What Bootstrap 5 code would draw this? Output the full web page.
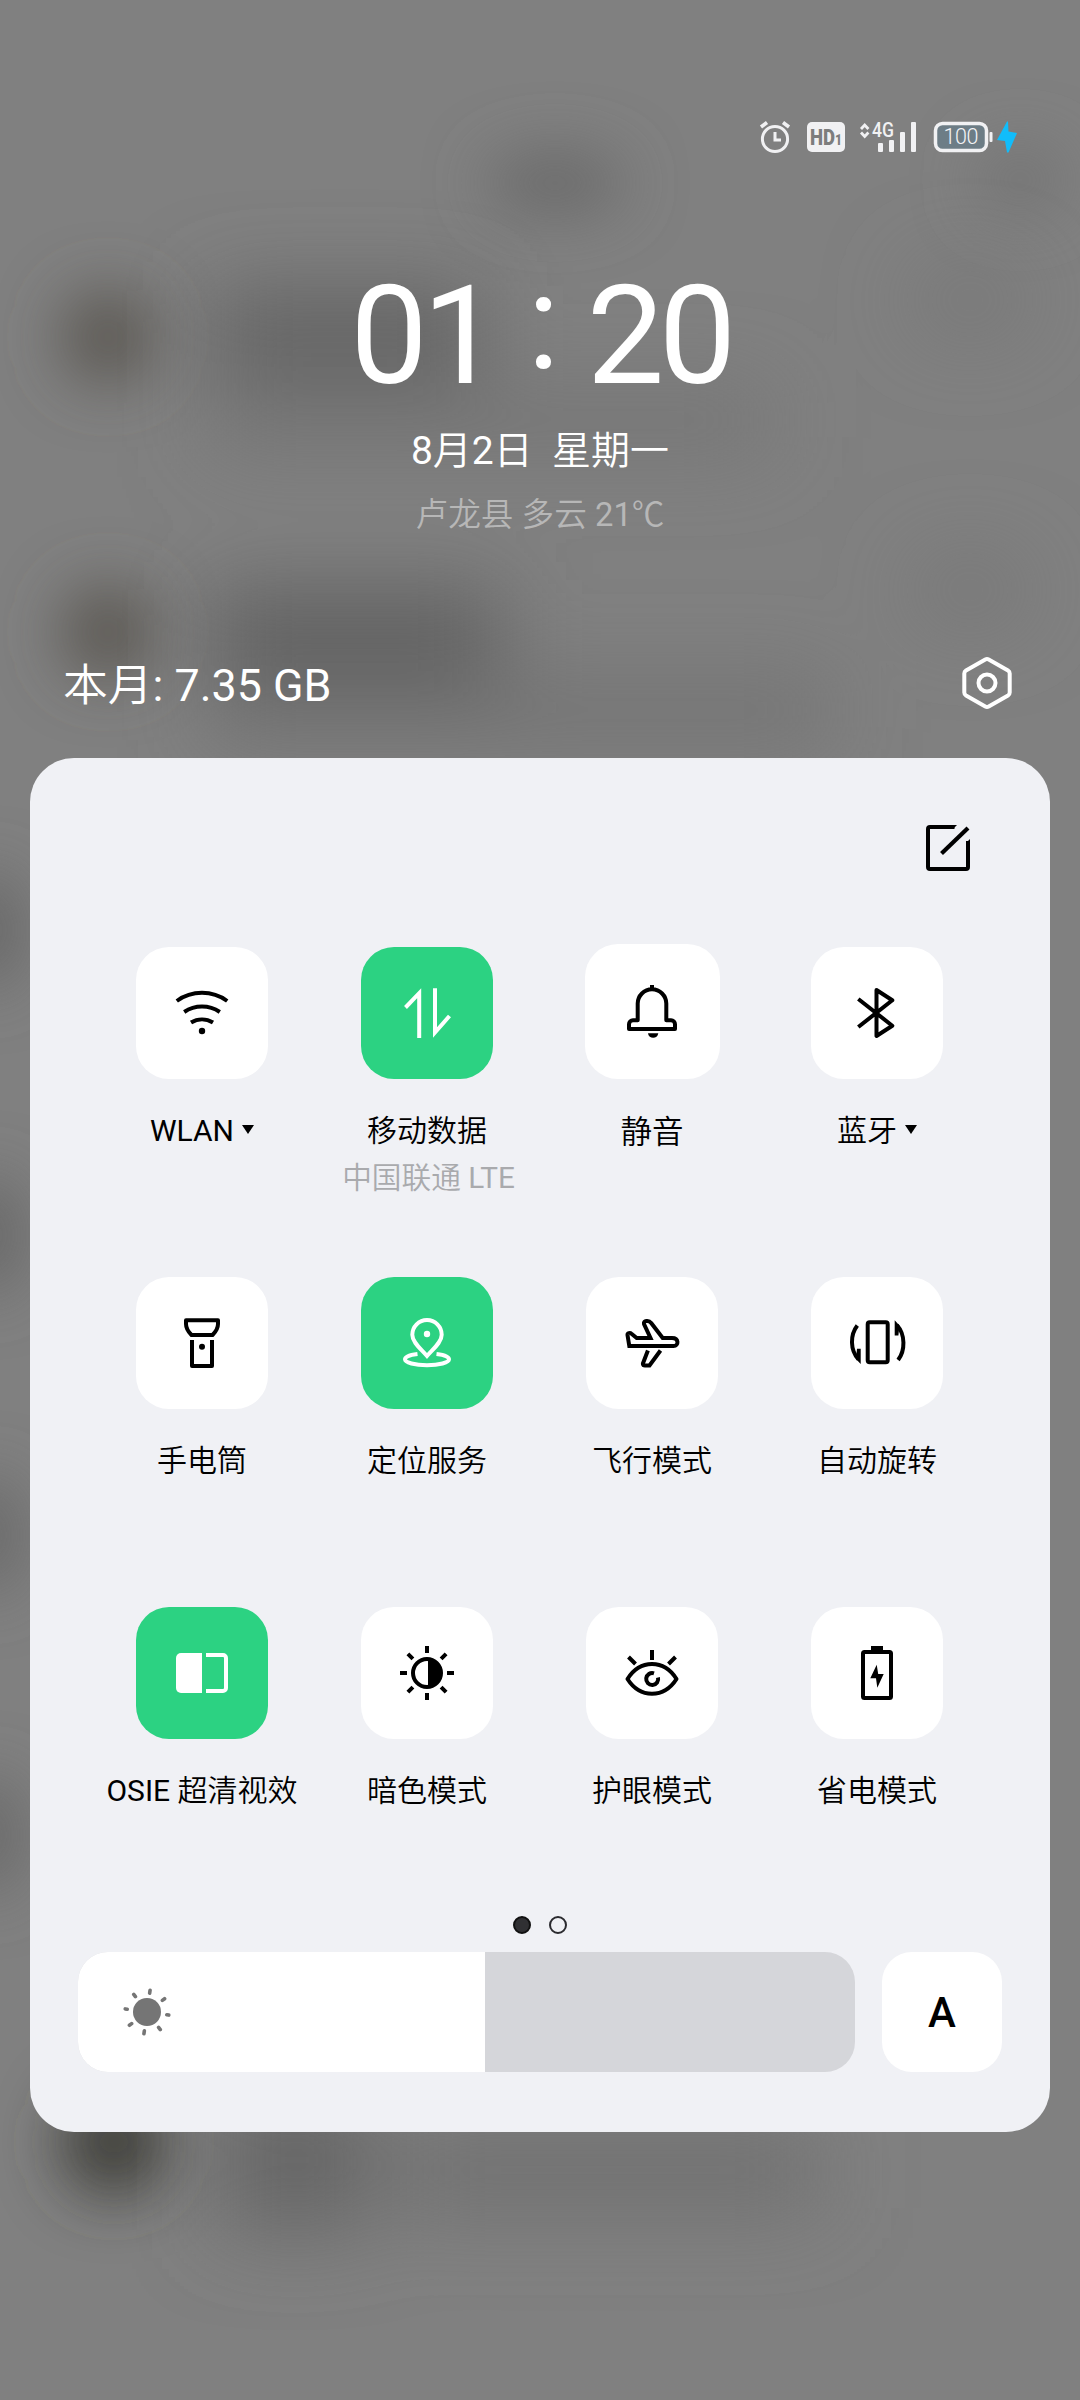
<!DOCTYPE html>
<html lang="zh-CN">
<head>
<meta charset="utf-8">
<meta name="viewport" content="width=device-width, initial-scale=1">
<title>控制中心</title>
<link rel="stylesheet" href="https://cdn.jsdelivr.net/npm/bootstrap@5.3.0/dist/css/bootstrap.min.css">
<style>
body{margin:0;background:#7f7f7f;font-family:Roboto,"Noto Sans CJK SC DemiLight","Noto Sans CJK SC Light","Noto Sans CJK SC",sans-serif;color:#fff}
svg{display:block;flex:none}
.screen{width:1080px;height:2400px;overflow:hidden}
.backdrop{z-index:0}
.content{z-index:1;height:2400px}
.statusbar{height:154px;padding:0 62px 0 0}
.clock{font-size:138px;line-height:138px;margin-top:113px;height:138px;padding-left:1px}
.clock span{letter-spacing:-5.5px}
.clock .colon{margin:-13px 27px 0 33px;letter-spacing:0;font-size:134px}
.date{font-size:39px;line-height:50px;margin-top:21px;white-space:pre}
.weather{font-size:32.7px;line-height:44px;margin-top:17px;color:#b7b7b7}
.usage{font-size:44.8px;line-height:60px;padding:0 66px 0 63px;margin-top:119px;height:60px}
.usage svg{margin-top:-4px}
.panel{width:1020px;height:1374px;margin:42px 30px 0;background:#f0f1f5;border-radius:44px;color:#000}
.editbar{height:186px;padding:67px 80px 0 0}
.tiles{padding:0 60.5px 0 59.5px;--bs-gutter-x:0;margin:0}
.tile{height:330px}
.tile-btn{width:132px;height:132px;border-radius:33px;background:#fff;border:0;padding:0;margin-top:3px;color:#000}
.tile-btn.on{background:#2cd282;color:#fff}
.tile-btn.pressed{width:135px;height:135px;margin-top:0;padding-top:3px}
.tile-label{font-size:30px;line-height:40px;margin-top:32px;white-space:nowrap}
.tile-label.big{font-size:31.5px;margin-top:34px}
.tile-sub{font-size:29.7px;line-height:40px;margin-top:7px;padding-left:3px;color:#a9aaad;white-space:nowrap}
.arrow-down{border:6.5px solid transparent;border-top:9px solid #000;border-bottom:0;margin-left:8px;margin-top:-3px}
.pager{height:18px;margin-top:-18px;gap:18px}
.pager span{width:18px;height:18px;border-radius:50%;border:2px solid #2b2b2f}
.pager .now{background:#303033;border-color:#111}
.controls{gap:27px;margin-top:18px;padding:0 48px}
.slider{width:777px;height:120px;border-radius:30px;background:#d5d6da;overflow:hidden}
.slider-fill{height:120px;background:#fff;padding-left:44px}
.auto-btn{width:120px;height:120px;border-radius:30px;background:#fff;border:0;font-size:42px;font-weight:500;line-height:42px;color:#000;padding:2px 0 0}
.ic{fill:none;stroke:currentColor;stroke-width:4}
.ic .f{fill:currentColor;stroke:none}
</style>
</head>
<body>
<div class="screen position-relative">
  <svg class="backdrop position-absolute top-0 start-0" width="1080" height="2400" viewBox="0 0 1080 2400">
    <defs>
      <filter id="soft" x="-100%" y="-100%" width="300%" height="300%"><feGaussianBlur stdDeviation="30"/></filter>
      <filter id="wide" x="-100%" y="-100%" width="300%" height="300%"><feGaussianBlur stdDeviation="42"/></filter>
    </defs>
    <rect width="1080" height="2400" fill="#808080"/>
    <g filter="url(#soft)">
      <ellipse cx="555" cy="183" rx="70" ry="32" fill="#6a6a6a"/>
      <ellipse cx="1020" cy="180" rx="45" ry="34" fill="#747474"/>
      <circle cx="108" cy="337" r="48" fill="#5d5a55"/>
      <circle cx="108" cy="632" r="48" fill="#5d5a55"/>
      <circle cx="114" cy="2142" r="54" fill="#40403a"/>
      <ellipse cx="-10" cy="930" rx="30" ry="60" fill="#646464"/>
      <ellipse cx="-10" cy="1235" rx="30" ry="60" fill="#646464"/>
      <ellipse cx="-10" cy="1535" rx="30" ry="60" fill="#666"/>
      <ellipse cx="-10" cy="1835" rx="30" ry="60" fill="#666"/>
    </g>
    <g filter="url(#wide)">
      <rect x="210" y="290" width="270" height="90" fill="#636363"/>
      <rect x="210" y="390" width="560" height="60" fill="#747474"/>
      <rect x="210" y="590" width="290" height="90" fill="#606060"/>
      <rect x="210" y="680" width="620" height="60" fill="#727272"/>
      <ellipse cx="970" cy="300" rx="60" ry="35" fill="#777"/>
      <ellipse cx="970" cy="590" rx="60" ry="35" fill="#777"/>
      <rect x="220" y="2090" width="150" height="140" fill="#666"/>
      <rect x="400" y="2130" width="420" height="80" fill="#707070"/>
    </g>
  </svg>

  <div class="content position-relative d-flex flex-column">
    <header class="statusbar d-flex justify-content-end align-items-end">
      <svg width="260" height="34" viewBox="758 120 260 34">
        <g fill="none" stroke="#f1f1f3" stroke-width="3">
          <circle cx="775" cy="139" r="12.600"/><path d="M775 132v8h6"/>
          <path d="M761 127l6-4.500M789 127l-6-4.500" stroke-width="3.600"/>
        </g>
        <rect x="807" y="122" width="38" height="30" rx="5" fill="#f1f1f3"/>
        <text x="810" y="145" font-size="21.500" font-weight="900" fill="#7d7d7d" textLength="32" lengthAdjust="spacingAndGlyphs">HD<tspan font-size="14">1</tspan></text>
        <path d="M861 129l3.700-4 3.700 4M861 132.500l3.700 4 3.700-4" fill="none" stroke="#f1f1f3" stroke-width="2.800"/>
        <text x="872" y="137" font-size="19.500" font-weight="500" fill="#f1f1f3" textLength="22" lengthAdjust="spacingAndGlyphs">4G</text>
        <g fill="#f1f1f3">
          <rect x="878" y="143" width="5" height="9" rx="1"/><rect x="889" y="140" width="5" height="12" rx="1"/>
          <rect x="900" y="132" width="5" height="20" rx="1"/><rect x="911" y="122" width="5" height="30" rx="1"/>
        </g>
        <rect x="935.500" y="123.500" width="51" height="27" rx="7" fill="#6d7d86" stroke="#f1f1f3" stroke-width="3.500"/>
        <rect x="989.500" y="132" width="3" height="10" rx="1" fill="#f1f1f3"/>
        <text x="961" y="144.300" font-size="21.500" font-weight="300" text-anchor="middle" fill="#f4f4f6" textLength="35">100</text>
        <path d="M1007 121.500l-10 18.500 8 1 2 11.500h1.500l8.500-19.500-8.500-1.500-.500-10z" fill="#11bdfb"/>
      </svg>
    </header>

    <div class="clock d-flex justify-content-center"><span>01</span><span class="colon">:</span><span>20</span></div>
    <div class="date text-center">8月2日  星期一</div>
    <div class="weather text-center">卢龙县 多云 21℃</div>

    <div class="usage d-flex justify-content-between align-items-center">
      <span>本月: 7.35 GB</span>
      <svg width="54" height="58" viewBox="0 0 54 58" fill="none" stroke="#fff" stroke-width="4" stroke-linejoin="round">
        <path d="M25.300 4.500a3.500 3.500 0 0 1 3.400 0L48 15.500a3.500 3.500 0 0 1 1.700 3V37.500a3.500 3.500 0 0 1-1.700 3L28.700 51.500a3.500 3.500 0 0 1-3.400 0L6 40.500a3.500 3.500 0 0 1-1.700-3V18.500a3.500 3.500 0 0 1 1.700-3z"/>
        <circle cx="27" cy="28" r="8.500"/>
      </svg>
    </div>

    <main class="panel">
      <div class="editbar d-flex justify-content-end">
        <svg width="44" height="46" viewBox="0 0 44 46" fill="none" stroke="#000" stroke-width="4" stroke-linejoin="round">
          <path d="M28.500 2H4a2 2 0 0 0-2 2V42a2 2 0 0 0 2 2H40a2 2 0 0 0 2-2V16"/>
          <path d="M15.500 28.500L42 3" stroke-width="4.200"/>
          <path d="M27 4l4-4h-4zM44 14l-4 4h4z" fill="#000" stroke="none"/>
        </svg>
      </div>

      <div class="tiles row row-cols-4">
        <div class="col tile d-flex flex-column align-items-center">
          <button class="tile-btn d-flex align-items-center justify-content-center" aria-label="WLAN">
            <svg class="ic" width="60" height="60" viewBox="0 0 60 60"><path d="M4.800 18a43 43 0 0 1 50.400 0M12.200 29a32 32 0 0 1 35.600 0M19 39.500a21 21 0 0 1 22 0"/><circle class="f" cx="30" cy="48" r="3.200"/></svg>
          </button>
          <div class="tile-label d-flex align-items-center">WLAN<i class="arrow-down"></i></div>
        </div>
        <div class="col tile d-flex flex-column align-items-center">
          <button class="tile-btn on d-flex align-items-center justify-content-center" aria-label="移动数据">
            <svg class="ic" width="60" height="60" viewBox="0 0 60 60"><path d="M8.500 24.500L22.200 10.200V55M38 5.300V49.500L52.500 33"/></svg>
          </button>
          <div class="tile-label">移动数据</div>
          <div class="tile-sub">中国联通 LTE</div>
        </div>
        <div class="col tile d-flex flex-column align-items-center">
          <button class="tile-btn pressed d-flex align-items-center justify-content-center" aria-label="静音">
            <svg class="ic" width="60" height="60" viewBox="0 0 60 60"><path d="M30 2v5M15.700 37.300V20.600A14.300 14.300 0 0 1 44.300 20.600V37.300H49a4 4 0 0 1 4 4V46H7V41.300a4 4 0 0 1 4-4Z" stroke-linejoin="round"/><path class="f" d="M26 50.300h10.300c-.600 6-9.700 6-10.300 0z"/></svg>
          </button>
          <div class="tile-label big">静音</div>
        </div>
        <div class="col tile d-flex flex-column align-items-center">
          <button class="tile-btn d-flex align-items-center justify-content-center" aria-label="蓝牙">
            <svg class="ic" width="60" height="60" viewBox="0 0 60 60" stroke-linejoin="round"><path d="M11.300 16L45.300 42.700L29.500 53V7L45.300 17.300L11.300 44"/></svg>
          </button>
          <div class="tile-label d-flex align-items-center">蓝牙<i class="arrow-down"></i></div>
        </div>

        <div class="col tile d-flex flex-column align-items-center">
          <button class="tile-btn d-flex align-items-center justify-content-center" aria-label="手电筒">
            <svg class="ic" width="60" height="60" viewBox="0 0 60 60" stroke-linejoin="round"><path d="M14 7.300H46V11C46 16 43.500 19 40.500 22H19.500C16.500 19 14 16 14 11ZM20 27V53H40V27"/><circle class="f" cx="30" cy="33.700" r="3"/></svg>
          </button>
          <div class="tile-label">手电筒</div>
        </div>
        <div class="col tile d-flex flex-column align-items-center">
          <button class="tile-btn on d-flex align-items-center justify-content-center" aria-label="定位服务">
            <svg class="ic" width="60" height="60" viewBox="0 0 60 60"><path d="M30 43C24 36 15.300 29.500 15.300 21.800A14.700 14.700 0 0 1 44.700 21.800C44.700 29.500 36 36 30 43Z"/><path d="M20.500 41C12 42 8 44 8 46.300c0 3.300 9.800 5.900 22 5.900s22-2.600 22-5.900c0-2.300-4-4.300-12.500-5.300"/><circle class="f" cx="30" cy="21" r="3.200"/></svg>
          </button>
          <div class="tile-label">定位服务</div>
        </div>
        <div class="col tile d-flex flex-column align-items-center">
          <button class="tile-btn d-flex align-items-center justify-content-center" aria-label="飞行模式">
            <svg class="ic" width="60" height="60" viewBox="0 0 60 60"><path d="M7.300 33L5.500 22C5.300 20 8 19.500 9.500 20.800L14.700 25H28.500L22 11C21 7.500 27 7 29 9.800L40.700 25H50C57 25 57 33 51.500 33ZM25.900 37.500L20.900 50.500C20.700 52.300 21.500 52.500 23 52.500H27.500L38.500 37.500"/></svg>
          </button>
          <div class="tile-label">飞行模式</div>
        </div>
        <div class="col tile d-flex flex-column align-items-center">
          <button class="tile-btn d-flex align-items-center justify-content-center" aria-label="自动旋转">
            <svg class="ic" width="60" height="60" viewBox="0 0 60 60"><rect x="20.700" y="9.300" width="20" height="40" rx="2"/><path d="M10.300 12.500C3 22 3 37 11.500 46.500M51.100 47C58.400 37.500 58.400 21.500 49.900 12"/><path class="f" d="M13.700 51V35.700H10L9 46zM47.700 7.300V22.600H51.400L52.400 12.500z"/></svg>
          </button>
          <div class="tile-label">自动旋转</div>
        </div>

        <div class="col tile d-flex flex-column align-items-center">
          <button class="tile-btn on d-flex align-items-center justify-content-center" aria-label="OSIE 超清视效">
            <svg class="ic" width="60" height="60" viewBox="0 0 60 60"><path class="f" d="M30 10H9a5 5 0 0 0-5 5V45a5 5 0 0 0 5 5H30z"/><path d="M34 12H51a3 3 0 0 1 3 3V45a3 3 0 0 1-3 3H34"/></svg>
          </button>
          <div class="tile-label">OSIE 超清视效</div>
        </div>
        <div class="col tile d-flex flex-column align-items-center">
          <button class="tile-btn d-flex align-items-center justify-content-center" aria-label="暗色模式">
            <svg class="ic" width="60" height="60" viewBox="0 0 60 60"><circle cx="30" cy="30" r="14"/><path class="f" d="M31 16a14 14 0 0 1 0 28z"/><path d="M30 3v7M30 50v7M3 30h7M50 30h7M10.900 10.900l5 5M44.100 44.100l5 5M10.900 49.100l5-5M44.100 15.900l5-5"/></svg>
          </button>
          <div class="tile-label">暗色模式</div>
        </div>
        <div class="col tile d-flex flex-column align-items-center">
          <button class="tile-btn d-flex align-items-center justify-content-center" aria-label="护眼模式">
            <svg class="ic" width="60" height="60" viewBox="0 0 60 60"><path d="M5.500 36C18 16 42 16 54.500 36C42 55.600 18 55.600 5.500 36Z" stroke-linejoin="round"/><path d="M32 30.300A6 6 0 1 0 36 34.500M30 7v10M6.500 14l7 7M53.500 14l-7 7"/></svg>
          </button>
          <div class="tile-label">护眼模式</div>
        </div>
        <div class="col tile d-flex flex-column align-items-center">
          <button class="tile-btn d-flex align-items-center justify-content-center" aria-label="省电模式">
            <svg class="ic" width="60" height="60" viewBox="0 0 60 60"><rect x="16" y="9" width="28" height="46" rx="1.500"/><path class="f" d="M24 3h12v5H24zM29.700 21.700L23.300 35.300H29L30.300 44.700L36.700 31H31.200z"/></svg>
          </button>
          <div class="tile-label">省电模式</div>
        </div>
      </div>

      <div class="pager d-flex justify-content-center"><span class="now"></span><span></span></div>

      <div class="controls d-flex">
        <div class="slider">
          <div class="slider-fill d-flex align-items-center" style="width:52.4%">
            <svg width="50" height="50" viewBox="-25 -25 50 50" stroke="#757575" stroke-width="3.600" stroke-linecap="round">
              <circle r="14" fill="#757575" stroke="none"/>
              <g transform="rotate(8)"><path d="M0-22v3M0 22v-3M-22 0h2M22 0h-2M-15.600-15.600l2 2M15.600 15.600l-2-2M-15.600 15.600l2-2M15.600-15.600l-2 2"/></g>
            </svg>
          </div>
        </div>
        <button class="auto-btn">A</button>
      </div>
    </main>
  </div>
</div>
<script src="https://cdn.jsdelivr.net/npm/bootstrap@5.3.0/dist/js/bootstrap.bundle.min.js"></script>
</body>
</html>
